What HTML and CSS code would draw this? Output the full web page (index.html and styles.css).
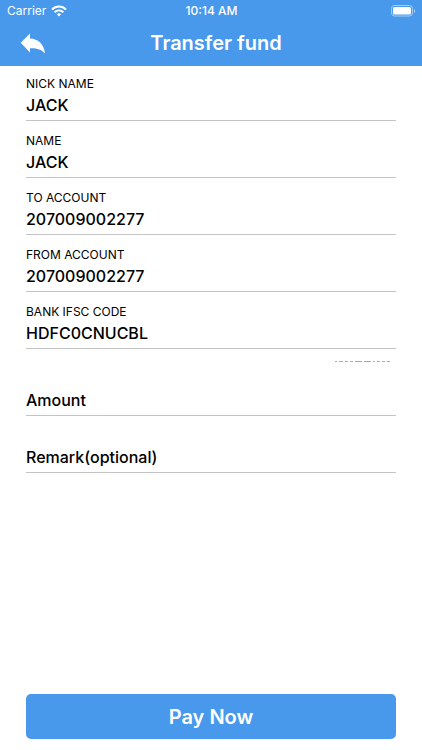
FILE: index.html
```html
<!DOCTYPE html>
<html lang="en">
<head>
    <meta charset="UTF-8">
    <meta name="viewport" content="width=device-width, initial-scale=1.0">
    <title>Transfer fund</title>
    <link rel="stylesheet" href="styles.css">
</head>
<body>
    <header>
        <div class="status-bar">
            <div class="carrier">
                <span>Carrier</span>
                <svg width="16" height="12" viewBox="0 0 16 12" fill="none" stroke="#fff" stroke-width="2">
                    <path d="M1 4.600C5 .6 11 .6 15 4.600"/>
                    <path d="M3.600 7.300C6.200 4.800 9.800 4.800 12.400 7.300"/>
                    <path d="M5.900 9.200Q8 7.400 10.100 9.200L8 11.400Z" fill="#fff" stroke="none"/>
                </svg>
            </div>
            <span class="time">10:14 AM</span>
            <div class="battery">
                <svg width="25" height="12" viewBox="0 0 25 12">
                    <rect x=".5" y=".5" width="21" height="10.500" rx="3" fill="none" stroke="#a9cff7"/>
                    <rect x="2" y="2" width="18" height="7.500" rx="1.500" fill="#fff"/>
                    <path d="M23 4v4c1.600-.6 1.600-3.400 0-4z" fill="#a9cff7"/>
                </svg>
            </div>
        </div>
        <div class="nav-bar">
            <button type="button" class="back" aria-label="Back">
                <svg width="26" height="21" viewBox="0 0 26 21">
                    <path d="M.7 9.700L10 .6v5c8 .3 13.800 5.500 15 14.800-4-4.300-8.500-5.500-15-5.200v4.400z" fill="#fff"/>
                </svg>
            </button>
            <h1>Transfer fund</h1>
        </div>
    </header>

    <form id="transferForm">
        <div class="field">
            <label for="nickName">NICK NAME</label>
            <input type="text" id="nickName" value="JACK" readonly>
        </div>
        <div class="field">
            <label for="name">NAME</label>
            <input type="text" id="name" value="JACK" readonly>
        </div>
        <div class="field">
            <label for="toAccount">TO ACCOUNT</label>
            <input type="text" id="toAccount" value="207009002277" readonly>
        </div>
        <div class="field">
            <label for="fromAccount">FROM ACCOUNT</label>
            <input type="text" id="fromAccount" value="207009002277" readonly>
        </div>
        <div class="field">
            <label for="ifsc">BANK IFSC CODE</label>
            <input type="text" id="ifsc" value="HDFC0CNUCBL" readonly>
        </div>

        <!-- collapsed bank hint, only a thin strip shows -->
        <svg class="hint" width="58" height="2" viewBox="0 0 58 2">
            <path d="M1 .5H57" stroke="#aaa" stroke-dasharray="2 2 4 2 3 2 3 2 7 2 7 2 2 2 3 2 3 2 3 2 2 2"/>
        </svg>

        <div class="entry">
            <input type="text" id="amount" name="amount" placeholder="Amount" aria-label="Amount">
        </div>
        <div class="entry">
            <input type="text" id="remark" name="remark" placeholder="Remark(optional)" aria-label="Remark(optional)">
        </div>

        <button type="submit" class="pay">Pay Now</button>
    </form>
</body>
</html>
```
FILE: styles.css
```css
* {
    margin: 0;
    padding: 0;
    box-sizing: border-box;
}

body {
    display: flex;
    flex-direction: column;
    min-height: 100vh;
    font-family: Inter, "Liberation Sans", sans-serif;
    background-color: #fff;
    color: #000;
}

header {
    background-color: #4898ec;
    color: #fff;
}

.status-bar {
    display: grid;
    grid-template-columns: 1fr auto 1fr;
    align-items: center;
    height: 22px;
    padding: 0 6px 1px 7px;
    font-size: 12px;
}

.carrier {
    display: flex;
    align-items: center;
    gap: 5px;
}

.time {
    font-weight: 500;
}

.battery {
    display: flex;
    justify-content: flex-end;
}

.nav-bar {
    display: grid;
    grid-template-columns: 1fr auto 1fr;
    align-items: center;
    height: 44px;
    padding: 0 10px 2px 20px;
}

h1 {
    font-size: 20px;
    font-weight: 600;
}

button {
    border: none;
    font-family: inherit;
    color: #fff;
    cursor: pointer;
}

.back {
    display: flex;
    justify-self: start;
    background: none;
}

form {
    flex-grow: 1;
    display: flex;
    flex-direction: column;
    padding: 10px 26px 11px;
}

.field {
    margin-bottom: 12px;
}

label {
    display: block;
    font-size: 12px;
    line-height: 16px;
}

input {
    display: block;
    width: 100%;
    height: 29px;
    padding-bottom: 3px;
    border: none;
    border-bottom: 1px solid #c4c4c4;
    background: none;
    font-family: inherit;
    font-size: 16px;
    font-weight: 500;
    color: #000;
    outline: none;
}

input::placeholder {
    color: #000;
    opacity: 1;
}

.hint {
    align-self: flex-end;
    margin-right: 4px;
}

.entry {
    padding-top: 24px;
    margin-bottom: 4px;
}

.pay {
    height: 45px;
    margin-top: auto;
    border-radius: 5px;
    background-color: #4898ec;
    font-size: 20px;
    font-weight: 600;
}
```
